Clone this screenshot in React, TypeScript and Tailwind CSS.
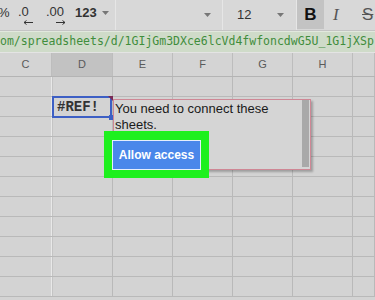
import React from "react";

const COLS = [
  { l: "C", w: 52 },
  { l: "D", w: 61 },
  { l: "E", w: 60 },
  { l: "F", w: 60 },
  { l: "G", w: 60 },
  { l: "H", w: 60 },
  { l: "", w: 22 },
];

function Caret() {
  return (
    <svg width="7" height="4" viewBox="0 0 7 4" className="shrink-0">
      <path d="M0 0 L7 0 L3.5 4 Z" fill="#777" />
    </svg>
  );
}

function Sep() {
  return <div className="w-px self-stretch bg-[#e6e6e6] shrink-0" />;
}

function Toolbar() {
  return (
    <div
      className="flex h-[31px] bg-[#d8d8d8] border-b border-[#c4c4c4] text-[#333]"
      style={{ fontFamily: '"Liberation Sans", Arial, sans-serif' }}
    >
      <div className="w-[115px] shrink-0 flex items-start pt-[5px]">
        <span className="w-[20px] shrink-0 text-[13px] leading-[16px] ml-[-2px]">%</span>
        <div className="w-[28px] shrink-0 flex flex-col items-start">
          <span className="text-[13px] leading-[14px]">.0</span>
          <svg width="10" height="5" viewBox="0 0 10 5" className="ml-[5px] mt-[1px]">
            <path d="M1 2.5 H10 M1 2.5 L3.5 0.5 M1 2.5 L3.5 4.5" stroke="#333" strokeWidth="1" fill="none" />
          </svg>
        </div>
        <div className="w-[29px] shrink-0 flex flex-col items-start">
          <span className="text-[13px] leading-[14px]">.00</span>
          <svg width="10" height="5" viewBox="0 0 10 5" className="ml-[10px] mt-[1px]">
            <path d="M0 2.5 H9 M9 2.5 L6.5 0.5 M9 2.5 L6.5 4.5" stroke="#333" strokeWidth="1" fill="none" />
          </svg>
        </div>
        <div className="flex items-center gap-[5px] h-[16px]">
          <span className="text-[13px] font-bold">123</span>
          <Caret />
        </div>
      </div>
      <Sep />
      <div className="w-[106px] shrink-0 flex items-center justify-end pr-[11px]">
        <Caret />
      </div>
      <Sep />
      <div className="w-[73px] shrink-0 flex items-center justify-between pl-[14px] pr-[12px]">
        <span className="text-[13px]">12</span>
        <Caret />
      </div>
      <Sep />
      <div className="w-[27px] h-[29px] shrink-0 bg-[#c3c3c3] flex items-center justify-center text-[17px] font-bold text-[#111]">
        B
      </div>
      <div className="flex items-center pl-[9px] w-[38px] shrink-0 text-[17px] italic text-[#555]" style={{ fontFamily: '"Liberation Serif", serif' }}>
        I
      </div>
      <div className="flex items-center text-[17px] text-[#555] line-through">S</div>
    </div>
  );
}

function UrlBar() {
  return (
    <div className="h-[21px] bg-[#cfdbc9] border-t border-[#e2e8de] flex items-center overflow-hidden whitespace-nowrap">
      <span className="text-[11.5px] text-[#3f8d3c]" style={{ fontFamily: '"DejaVu Sans Mono", "Liberation Mono", monospace' }}>
        om/spreadsheets/d/1GIjGm3DXce6lcVd4fwfoncdwG5U_1G1jXSp
      </span>
    </div>
  );
}

function HeaderRow() {
  return (
    <div className="flex h-[25px] bg-[#d4d4d4] border-t border-[#e4e4e4] border-b border-b-[#b4b4b4]">
      {COLS.map((c, i) => (
        <div
          key={i}
          className={`shrink-0 flex items-center justify-center text-[11px] text-[#5a5a5a] border-r border-[#bdbdbd] ${c.l === "D" ? "bg-[#c2c2c2]" : ""}`}
          style={{ width: c.w, fontFamily: '"Liberation Sans", Arial, sans-serif' }}
        >
          {c.l}
        </div>
      ))}
    </div>
  );
}

function RefCell() {
  return (
    <div className="absolute left-0 top-[-1px] w-[60px] h-[22px] border-2 border-[#3d5fc4] flex items-center pl-[3px] z-10">
      <span className="text-[14px] font-bold text-[#333] leading-none" style={{ fontFamily: '"Liberation Mono", monospace' }}>
        #REF!
      </span>
      <div className="absolute right-[-3px] top-[-2px] w-0 h-0 border-l-[5px] border-l-transparent border-t-[5px] border-t-[#7a2a55]" />
      <div className="absolute right-[-4px] bottom-[-4px] w-[5px] h-[5px] bg-[#3d5fc4]" />
    </div>
  );
}

function Row({ idx }: { idx: number }) {
  return (
    <div className="flex h-[20px] border-b border-[#b9b9b9]">
      {COLS.map((c, i) => (
        <div
          key={i}
          className={`relative shrink-0 border-r ${i === 0 ? "border-[#e8e8e8] shadow-[1px_0_0_#c4c4c4]" : "border-[#b9b9b9]"}`}
          style={{ width: c.w }}
        >
          {idx === 1 && c.l === "D" && <RefCell />}
        </div>
      ))}
    </div>
  );
}

export default function App() {
  return (
    <div className="relative w-[375px] h-[300px] overflow-hidden bg-[#d3d3d3]" style={{ fontFamily: '"Liberation Sans", Arial, sans-serif' }}>
      <Toolbar />
      <UrlBar />
      <HeaderRow />
      {Array.from({ length: 11 }).map((_, i) => (
        <Row key={i} idx={i} />
      ))}
      {/* comment popup overlay */}
      <div className="absolute left-[113px] top-[99px] w-[198px] h-[71px] bg-[#d5d5d5] border border-[#cf8795] shadow-[2px_2px_2px_rgba(0,0,0,0.25)] z-20 flex">
        <div className="flex-1 pl-[1px] pt-[1px] pr-[14px] text-[13px] leading-[16px] text-[#1a1a1a]">
          You need to connect these sheets.
        </div>
        <div className="w-[7px] mr-[1px] mb-[2px] bg-[#a9a9a9] shrink-0" />
      </div>
      {/* highlight overlay */}
      <div className="absolute left-[104px] top-[131px] w-[105px] h-[47px] bg-[#1ef01e] z-30 flex items-center justify-center">
        <div className="w-[89px] h-[30px] bg-[#4a87ea] border border-[#e6eefc] flex items-center justify-center text-white text-[12px] font-bold">
          Allow access
        </div>
      </div>
    </div>
  );
}
